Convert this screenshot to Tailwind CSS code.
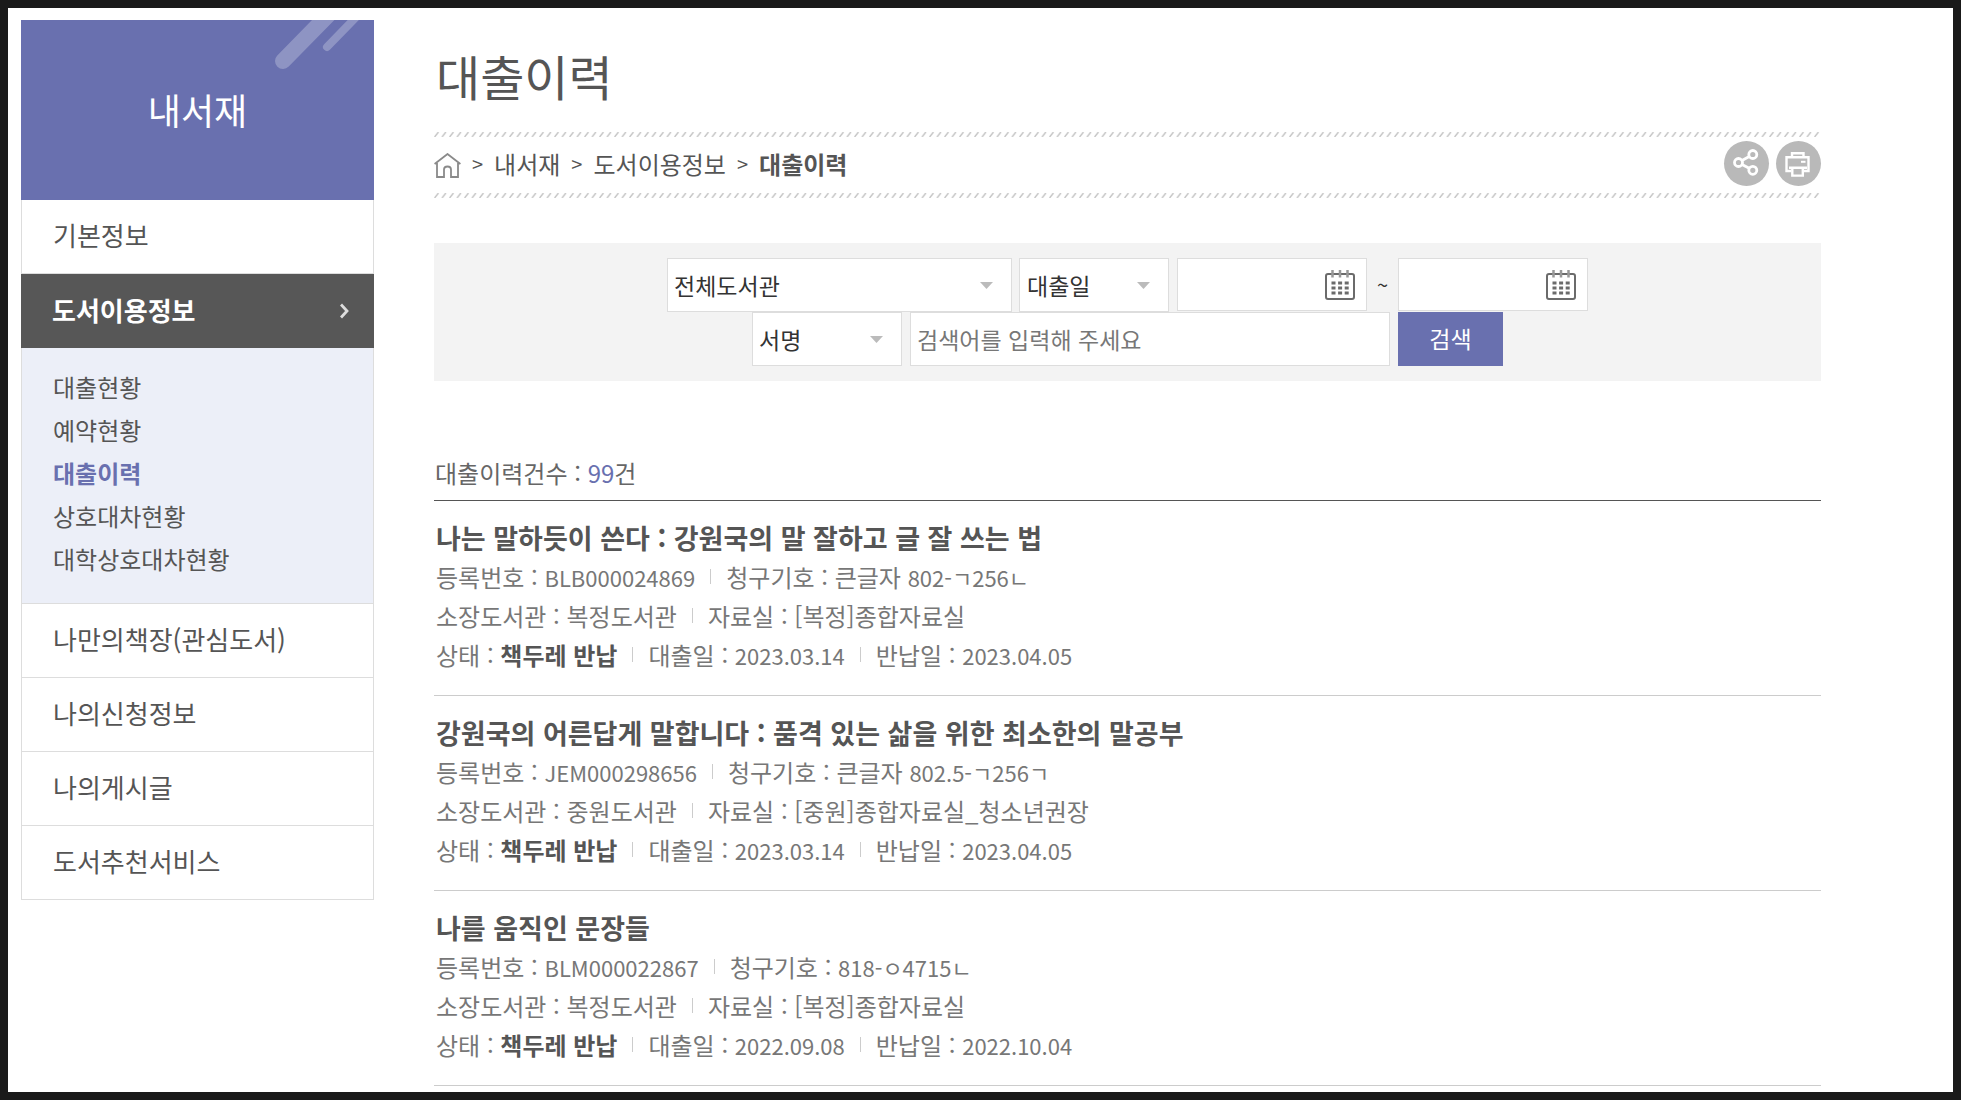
<!DOCTYPE html>
<html lang="ko">
<head>
<meta charset="utf-8">
<meta name="viewport" content="width=device-width, initial-scale=1">
<title>대출이력</title>
<script src="https://cdn.jsdelivr.net/npm/@tailwindcss/browser@4"></script>
</head>
<body class="flex min-h-screen items-start border-8 border-[#1a1a1a] bg-white pt-3 pr-[132px] pl-[13px] font-['Noto_Sans_CJK_KR',sans-serif] text-2xl text-[#555]">

<aside class="w-[353px] shrink-0">
  <div class="relative flex h-[180px] items-center justify-center bg-[#6970af] pb-[2px]">
    <svg class="absolute top-0 right-0 h-[60px] w-[99px]" viewBox="0 0 99 60" fill="none" stroke="#fff" stroke-opacity=".25" stroke-linecap="round" aria-hidden="true">
      <path d="M8 41 L59 -11" stroke-width="16"/>
      <path d="M52 27 L88 -10" stroke-width="8"/>
    </svg>
    <h2 class="text-4xl text-white">내서재</h2>
  </div>
  <nav aria-label="내서재 메뉴">
    <ul class="text-[26px] leading-[69px]">
      <li class="border-x border-b border-[#ddd]"><a href="#" class="block pb-1 pl-[31px]">기본정보</a></li>
      <li>
        <a href="#" class="flex h-[74px] items-center justify-between bg-[#575757] pr-[25px] pb-1 pl-[31px] font-bold text-white">도서이용정보
          <svg class="mt-1 h-4 w-[9px]" viewBox="0 0 9 16" fill="none" stroke="#ddd" stroke-width="2.8" aria-hidden="true"><path d="M1 1.5 L7 8 L1 14.5"/></svg>
        </a>
        <ul class="border-x border-b border-[#ddd] bg-[#eceff8] pt-[17px] pb-[23px] pl-[31px] text-2xl leading-[43px]">
          <li><a href="#">대출현황</a></li>
          <li><a href="#">예약현황</a></li>
          <li><a href="#" class="font-bold text-[#6970af]">대출이력</a></li>
          <li><a href="#">상호대차현황</a></li>
          <li><a href="#">대학상호대차현황</a></li>
        </ul>
      </li>
      <li class="border-x border-b border-[#ddd]"><a href="#" class="block pb-1 pl-[31px]">나만의책장(관심도서)</a></li>
      <li class="border-x border-b border-[#ddd]"><a href="#" class="block pb-1 pl-[31px]">나의신청정보</a></li>
      <li class="border-x border-b border-[#ddd]"><a href="#" class="block pb-1 pl-[31px]">나의게시글</a></li>
      <li class="border-x border-b border-[#ddd]"><a href="#" class="block pb-1 pl-[31px]">도서추천서비스</a></li>
    </ul>
  </nav>
</aside>

<main class="ml-[60px] min-w-0 flex-1">
  <h1 class="h-28 pt-5 pl-[2px] text-5xl leading-[70px]">대출이력</h1>

  <div class="flex h-[66px] flex-col">
    <svg class="h-[5px] w-full shrink-0" aria-hidden="true">
      <defs><pattern id="hatch" width="7.5" height="5" patternUnits="userSpaceOnUse"><path d="M0.6 5 L4.4 0" stroke="#c4c4c4" stroke-width="1.4"/></pattern></defs>
      <rect width="100%" height="5" fill="url(#hatch)"/>
    </svg>
    <div class="flex flex-1 items-center justify-between pb-[3px]">
      <nav aria-label="현재 위치" class="flex items-center leading-9">
        <a href="#" aria-label="홈"><svg class="mt-[3px] h-[25px] w-[27px]" viewBox="0 0 27 25" fill="none" stroke="#8a8a8a" stroke-width="1.8" aria-hidden="true"><path d="M0.6 11 L13.5 1 L26.4 11 M3 10 V24 H10 V16.5 Q10 13.5 13.5 13.5 Q17 13.5 17 16.5 V24 H24 V10"/></svg></a>
        <span class="mx-[11px] text-xl">&gt;</span>
        <a href="#">내서재</a>
        <span class="mx-[11px] text-xl">&gt;</span>
        <a href="#">도서이용정보</a>
        <span class="mx-[11px] text-xl">&gt;</span>
        <strong>대출이력</strong>
      </nav>
      <div class="flex gap-[7px]">
        <button type="button" aria-label="공유" class="size-[45px] rounded-full bg-[#b9b9b9]">
          <svg class="size-[45px]" viewBox="0 0 45 45" fill="none" stroke="#fff" stroke-width="2.8" aria-hidden="true"><circle cx="14.5" cy="21.5" r="4"/><circle cx="28.8" cy="13.5" r="4"/><circle cx="28.8" cy="29.3" r="4"/><path d="M18 19.5 L25.2 15.5 M18 23.5 L25.2 27.3"/></svg>
        </button>
        <button type="button" aria-label="인쇄" class="size-[45px] rounded-full bg-[#b9b9b9]">
          <svg class="size-[45px]" viewBox="0 0 45 45" fill="none" stroke="#fff" stroke-width="2.4" aria-hidden="true"><path d="M16 15.5 V12.2 H27.5 V15.5 M15 30 H10.5 V16.2 H32.5 V30 H28 M13 26.8 H31 M16.3 27 V34.6 H26.8 V27"/><path d="M25 20.8 H29.5" stroke-width="2"/></svg>
        </button>
      </div>
    </div>
    <svg class="h-[5px] w-full shrink-0" aria-hidden="true"><rect width="100%" height="5" fill="url(#hatch)"/></svg>
  </div>

  <form class="mt-[45px] flex flex-col items-center bg-[#f3f3f3] py-[15px] text-[23px] text-[#333]">
    <div class="flex">
      <div class="relative mr-[7px]">
        <select aria-label="도서관" class="h-[54px] w-[345px] appearance-none border border-[#ddd] bg-white pl-[6px]"><option>전체도서관</option></select>
        <svg class="pointer-events-none absolute top-6 right-[19px] h-[7px] w-[13px]" viewBox="0 0 13 7" fill="#bbb" aria-hidden="true"><path d="M0 0 H13 L6.500 7 Z"/></svg>
      </div>
      <div class="relative mr-2">
        <select aria-label="날짜 기준" class="h-[54px] w-[150px] appearance-none border border-[#ddd] bg-white pl-[7px]"><option>대출일</option></select>
        <svg class="pointer-events-none absolute top-6 right-[19px] h-[7px] w-[13px]" viewBox="0 0 13 7" fill="#bbb" aria-hidden="true"><path d="M0 0 H13 L6.500 7 Z"/></svg>
      </div>
      <div class="flex h-[53px] w-[190px] items-center border border-[#ddd] bg-white pr-[11px]">
        <input type="text" aria-label="시작일" class="h-full min-w-0 flex-1 px-2">
        <button type="button" aria-label="시작일 선택"><svg class="block size-[30px]" viewBox="0 0 30 30" fill="none" stroke="#6b6b6b" aria-hidden="true"><rect x="1" y="4" width="28" height="25" rx="2" stroke-width="2"/><path d="M7.500 0 V7.500 M15 0 V7.500 M22.500 0 V7.500" stroke="#999" stroke-width="2.5"/><path d="M6.500 13 H24 M6.500 18 H24 M6.500 23 H24" stroke-width="3.200" stroke-dasharray="4 2.600"/></svg></button>
      </div>
      <span class="w-[31px] text-center text-xl leading-[54px]">~</span>
      <div class="flex h-[53px] w-[190px] items-center border border-[#ddd] bg-white pr-[11px]">
        <input type="text" aria-label="종료일" class="h-full min-w-0 flex-1 px-2">
        <button type="button" aria-label="종료일 선택"><svg class="block size-[30px]" viewBox="0 0 30 30" fill="none" stroke="#6b6b6b" aria-hidden="true"><rect x="1" y="4" width="28" height="25" rx="2" stroke-width="2"/><path d="M7.500 0 V7.500 M15 0 V7.500 M22.500 0 V7.500" stroke="#999" stroke-width="2.5"/><path d="M6.500 13 H24 M6.500 18 H24 M6.500 23 H24" stroke-width="3.200" stroke-dasharray="4 2.600"/></svg></button>
      </div>
    </div>
    <div class="flex gap-2">
      <div class="relative">
        <select aria-label="검색 항목" class="h-[54px] w-[150px] appearance-none border border-[#ddd] bg-white pl-[6px]"><option>서명</option></select>
        <svg class="pointer-events-none absolute top-6 right-[19px] h-[7px] w-[13px]" viewBox="0 0 13 7" fill="#bbb" aria-hidden="true"><path d="M0 0 H13 L6.500 7 Z"/></svg>
      </div>
      <input type="text" aria-label="검색어" placeholder="검색어를 입력해 주세요" class="h-[54px] w-[480px] border border-[#ddd] bg-white px-[6px] placeholder:text-[#777]">
      <button type="submit" class="h-[54px] w-[105px] bg-[#6970af] pb-[2px] text-white">검색</button>
    </div>
  </form>

  <p class="mt-[69px] h-[51px] border-b border-[#555] pl-px leading-[46px] text-[#666]">대출이력건수 : <span class="text-[#6970af]">99</span>건</p>

  <ul class="leading-[39px] text-[#777]">
    <li class="border-b border-[#ccc] pt-[17px] pb-[21px] pl-[2px]">
      <h3 class="h-[39px] text-[27px] font-bold text-[#555]"><a href="#">나는 말하듯이 쓴다 : 강원국의 말 잘하고 글 잘 쓰는 법</a></h3>
      <p class="flex h-[39px] items-center"><span>등록번호 : <span class="text-[22px]">BLB000024869</span></span><i class="mx-[15px] h-[15px] w-px bg-[#ccc]"></i><span>청구기호 : 큰글자 <span class="text-[22px]">802-ㄱ256ㄴ</span></span></p>
      <p class="flex h-[39px] items-center"><span>소장도서관 : 복정도서관</span><i class="mx-[15px] h-[15px] w-px bg-[#ccc]"></i><span>자료실 : [복정]종합자료실</span></p>
      <p class="flex h-[39px] items-center"><span>상태 : <strong class="text-[#555]">책두레 반납</strong></span><i class="mx-[15px] h-[15px] w-px bg-[#ccc]"></i><span>대출일 : <span class="text-[22px]">2023.03.14</span></span><i class="mx-[15px] h-[15px] w-px bg-[#ccc]"></i><span>반납일 : <span class="text-[22px]">2023.04.05</span></span></p>
    </li>
    <li class="border-b border-[#ccc] pt-[17px] pb-[21px] pl-[2px]">
      <h3 class="h-[39px] text-[27px] font-bold text-[#555]"><a href="#">강원국의 어른답게 말합니다 : 품격 있는 삶을 위한 최소한의 말공부</a></h3>
      <p class="flex h-[39px] items-center"><span>등록번호 : <span class="text-[22px]">JEM000298656</span></span><i class="mx-[15px] h-[15px] w-px bg-[#ccc]"></i><span>청구기호 : 큰글자 <span class="text-[22px]">802.5-ㄱ256ㄱ</span></span></p>
      <p class="flex h-[39px] items-center"><span>소장도서관 : 중원도서관</span><i class="mx-[15px] h-[15px] w-px bg-[#ccc]"></i><span>자료실 : [중원]종합자료실_청소년권장</span></p>
      <p class="flex h-[39px] items-center"><span>상태 : <strong class="text-[#555]">책두레 반납</strong></span><i class="mx-[15px] h-[15px] w-px bg-[#ccc]"></i><span>대출일 : <span class="text-[22px]">2023.03.14</span></span><i class="mx-[15px] h-[15px] w-px bg-[#ccc]"></i><span>반납일 : <span class="text-[22px]">2023.04.05</span></span></p>
    </li>
    <li class="border-b border-[#ccc] pt-[17px] pb-[21px] pl-[2px]">
      <h3 class="h-[39px] text-[27px] font-bold text-[#555]"><a href="#">나를 움직인 문장들</a></h3>
      <p class="flex h-[39px] items-center"><span>등록번호 : <span class="text-[22px]">BLM000022867</span></span><i class="mx-[15px] h-[15px] w-px bg-[#ccc]"></i><span>청구기호 : <span class="text-[22px]">818-ㅇ4715ㄴ</span></span></p>
      <p class="flex h-[39px] items-center"><span>소장도서관 : 복정도서관</span><i class="mx-[15px] h-[15px] w-px bg-[#ccc]"></i><span>자료실 : [복정]종합자료실</span></p>
      <p class="flex h-[39px] items-center"><span>상태 : <strong class="text-[#555]">책두레 반납</strong></span><i class="mx-[15px] h-[15px] w-px bg-[#ccc]"></i><span>대출일 : <span class="text-[22px]">2022.09.08</span></span><i class="mx-[15px] h-[15px] w-px bg-[#ccc]"></i><span>반납일 : <span class="text-[22px]">2022.10.04</span></span></p>
    </li>
  </ul>
</main>
</body>
</html>
